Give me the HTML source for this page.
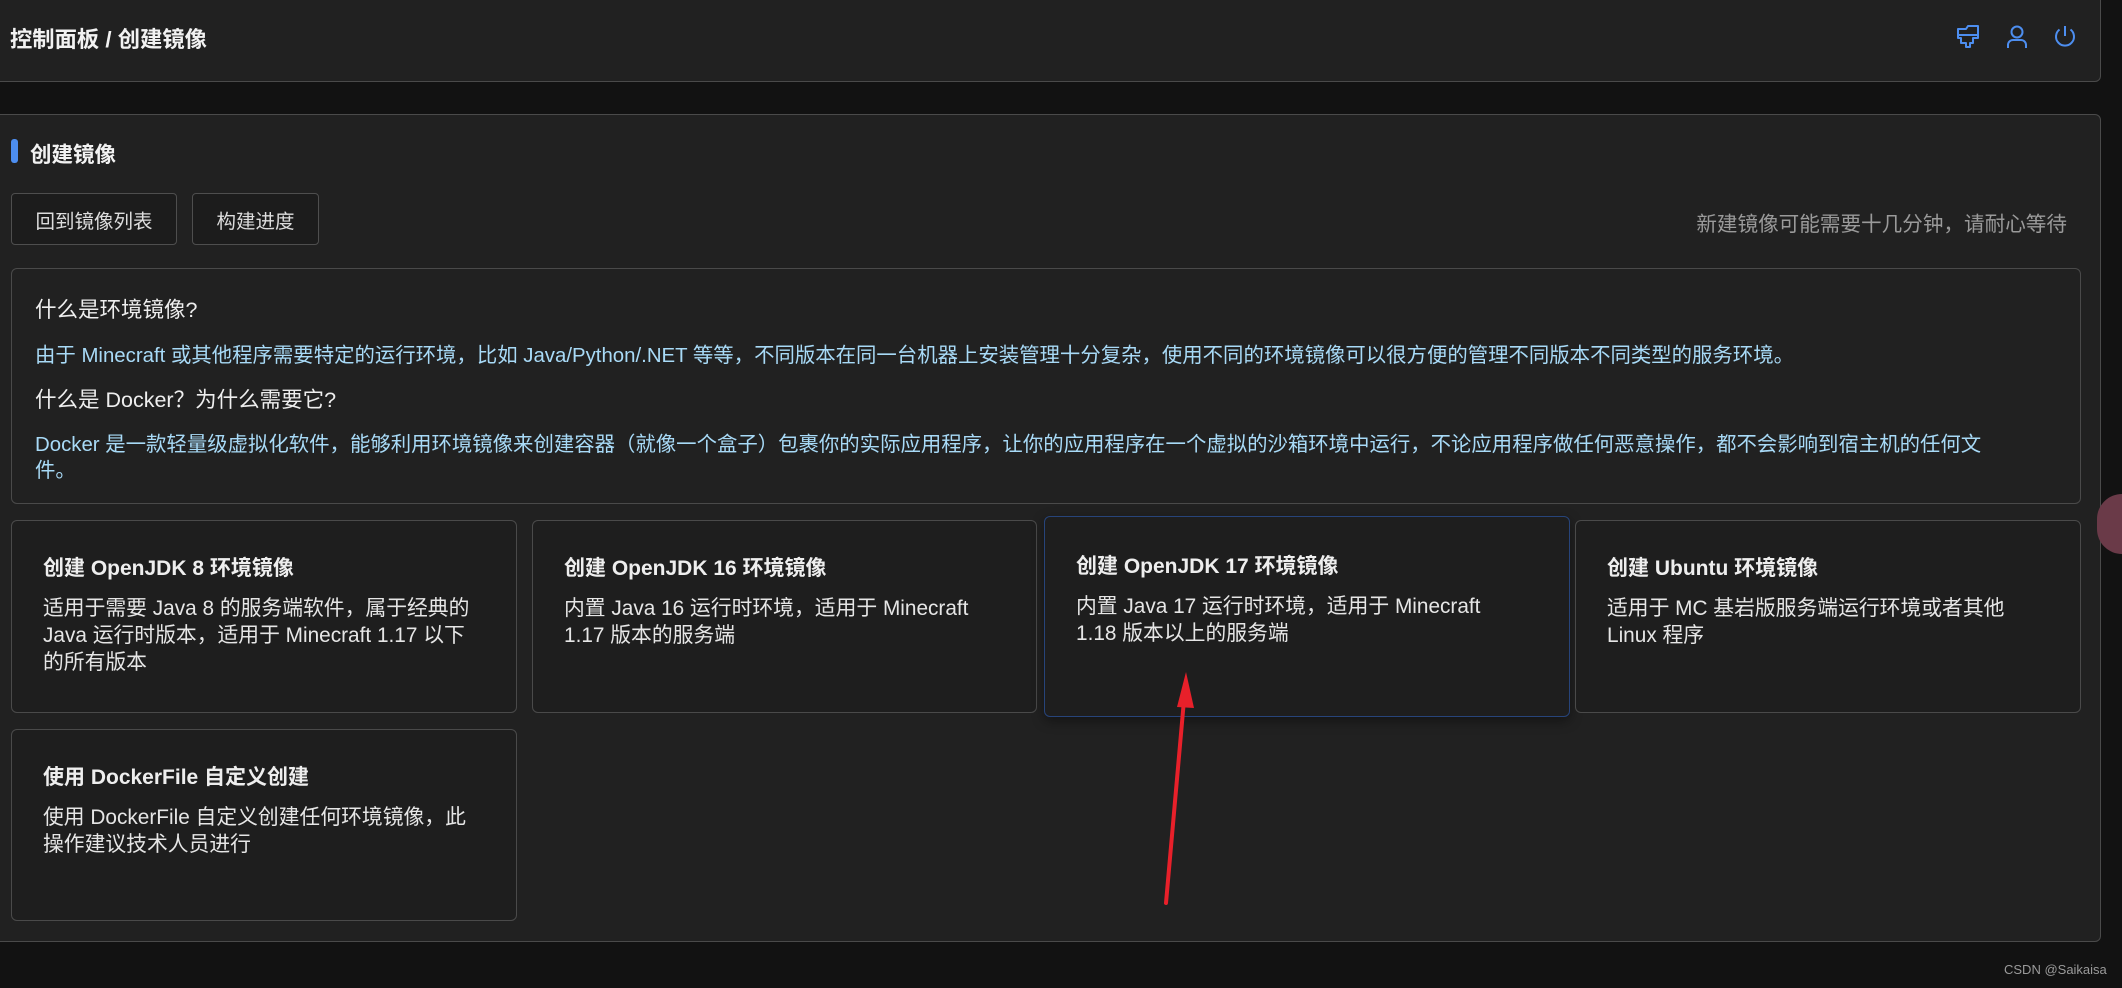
<!DOCTYPE html>
<html><head><meta charset="utf-8">
<style>
*{margin:0;padding:0;box-sizing:border-box}
body{width:2122px;height:988px;background:#121212;position:relative;overflow:hidden;font-family:"Liberation Sans","Noto Sans CJK SC",sans-serif;color:#e8e8e8}
.abs{position:absolute}
.panel{background:#212121;border:1px solid #4a4a4a;border-radius:6px}
.btn{position:absolute;border:1px solid #4e4e4e;border-radius:4px;background:#1c1c1c;color:#ddd;font-size:19.5px;display:flex;align-items:center;justify-content:center}
.card{position:absolute;background:#1e1e1e;border:1px solid #4a4a4a;border-radius:6px;padding:34px 31px 0 31px}
.card h3{font-size:21px;font-weight:bold;color:#eee;line-height:28px;margin-top:0}
.card p{font-size:20.8px;color:#e6e6e6;line-height:27px;margin-top:12px}
.info p.b{color:#a8daf7;font-size:20.4px;line-height:26px}
.info h4{font-size:21.5px;font-weight:normal;color:#eee;line-height:28px}
</style></head><body>
<div class="abs panel" style="left:-10px;top:-10px;width:2111px;height:92px"></div>
<div class="abs" style="left:10px;top:22px;font-size:22.3px;font-weight:bold;color:#f2f2f2">控制面板 / 创建镜像</div>
<svg class="abs" style="left:1955px;top:25px" width="26" height="24" viewBox="0 0 26 24" fill="none" stroke="#4d8ef0" stroke-width="2" stroke-linejoin="round"><path d="M3 4h8l2-3h10v12h-5v5h-3v4h-4v-4H6v-5H3z"/><path d="M3 10h20"/></svg>
<svg class="abs" style="left:2006px;top:25px" width="22" height="24" viewBox="0 0 22 24" fill="none" stroke="#4d8ef0" stroke-width="2"><circle cx="11" cy="7" r="5.5"/><path d="M2 23v-3a5 5 0 0 1 5-5h8a5 5 0 0 1 5 5v3"/></svg>
<svg class="abs" style="left:2053px;top:24px" width="24" height="25" viewBox="0 0 24 25" fill="none" stroke="#4d8ef0" stroke-width="2"><path d="M12 2v10"/><path d="M6.5 5.5a9 9 0 1 0 11 0"/></svg>

<div class="abs panel" style="left:-10px;top:114px;width:2111px;height:828px"></div>
<div class="abs" style="left:11px;top:139px;width:7px;height:24px;background:#4d8ef0;border-radius:3px"></div>
<div class="abs" style="left:30px;top:138px;font-size:21.5px;font-weight:bold;color:#f2f2f2">创建镜像</div>
<div class="btn" style="left:11px;top:193px;width:166px;height:52px">回到镜像列表</div>
<div class="btn" style="left:192px;top:193px;width:127px;height:52px">构建进度</div>
<div class="abs" style="right:55px;top:207px;font-size:20.6px;color:#9a9a9a">新建镜像可能需要十几分钟，请耐心等待</div>

<div class="abs info" style="left:11px;top:268px;width:2070px;height:236px;border:1px solid #4a4a4a;border-radius:6px;padding:27px 23px 0">
<h4>什么是环境镜像?</h4>
<p class="b" style="margin-top:19px">由于 Minecraft 或其他程序需要特定的运行环境，比如 Java/Python/.NET 等等，不同版本在同一台机器上安装管理十分复杂，使用不同的环境镜像可以很方便的管理不同版本不同类型的服务环境。</p>
<h4 style="margin-top:17px">什么是 Docker？为什么需要它?</h4>
<p class="b" style="margin-top:18px;width:1970px">Docker 是一款轻量级虚拟化软件，能够利用环境镜像来创建容器（就像一个盒子）包裹你的实际应用程序，让你的应用程序在一个虚拟的沙箱环境中运行，不论应用程序做任何恶意操作，都不会影响到宿主机的任何文件。</p>
</div>

<div class="card" style="left:11px;top:520px;width:506px;height:193px"><h3>创建 OpenJDK 8 环境镜像</h3><p>适用于需要 Java 8 的服务端软件，属于经典的 Java 运行时版本，适用于 Minecraft 1.17 以下的所有版本</p></div>
<div class="card" style="left:532px;top:520px;width:505px;height:193px"><h3>创建 OpenJDK 16 环境镜像</h3><p>内置 Java 16 运行时环境，适用于 Minecraft 1.17 版本的服务端</p></div>
<div class="card" style="left:1044px;top:516px;width:526px;height:201px;border-color:#27447a;padding-top:36px;box-shadow:0 4px 12px rgba(0,0,0,.4)"><h3>创建 OpenJDK 17 环境镜像</h3><p style="width:440px">内置 Java 17 运行时环境，适用于 Minecraft 1.18 版本以上的服务端</p></div>
<div class="card" style="left:1575px;top:520px;width:506px;height:193px"><h3>创建 Ubuntu 环境镜像</h3><p>适用于 MC 基岩版服务端运行环境或者其他 Linux 程序</p></div>
<div class="card" style="left:11px;top:729px;width:506px;height:192px"><h3>使用 DockerFile 自定义创建</h3><p>使用 DockerFile 自定义创建任何环境镜像，此操作建议技术人员进行</p></div>

<svg class="abs" style="left:0;top:0" width="2122" height="988"><path d="M1166 903L1184 700" stroke="#e8202a" stroke-width="4" stroke-linecap="round"/><path d="M1186 672L1177 707L1194 708Z" fill="#e8202a"/></svg>
<div class="abs" style="left:2097px;top:494px;width:50px;height:60px;border-radius:30px;background:#6a3a48"></div>
<div class="abs" style="left:2004px;top:962px;font-size:13px;color:#9a9a9a">CSDN @Saikaisa</div>
</body></html>
